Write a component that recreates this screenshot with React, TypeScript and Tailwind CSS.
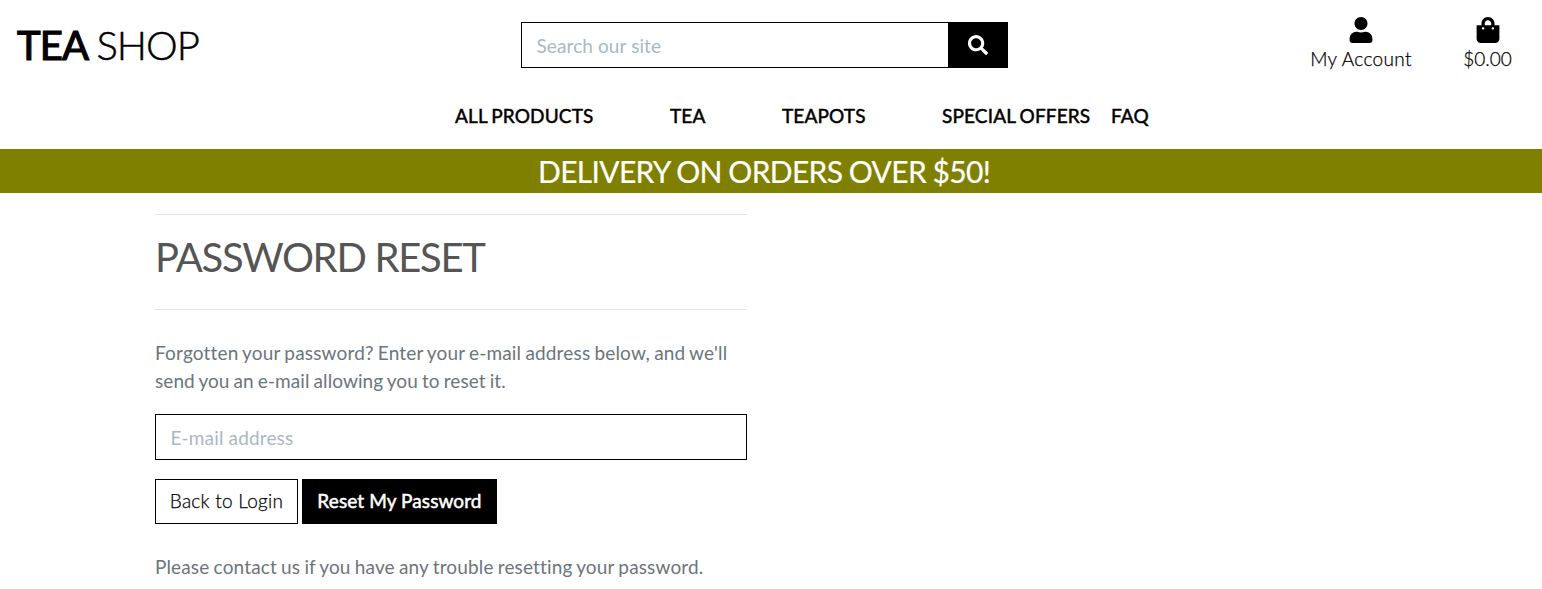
import { FaUser, FaShoppingBag, FaSearch } from "react-icons/fa";

function NavLink({ label, className }: { label: string; className: string }) {
  return (
    <a href="#" className={`block whitespace-nowrap tracking-[0.15px] [-webkit-text-stroke:0.5px] [word-spacing:-1px] ${className}`}>
      {label}
    </a>
  );
}

function Header() {
  return (
    <header className="h-[149px] text-black">
      <div className="flex h-[94px] items-start">
        <a href="#" className="ml-[17px] mt-[16px] w-[504px] text-[40px] leading-[58px]">
          <span className="tracking-[-0.9px] [-webkit-text-stroke:1.2px]">TEA</span>
          <span className="font-light tracking-[-1px] [-webkit-text-stroke:0.5px] [word-spacing:-1.5px]"> SHOP</span>
        </a>
        <form className="mt-[22px] flex h-[46px] w-[487px] border border-black">
          <input className="min-w-0 flex-1 pl-[14.5px] pt-[2px] tracking-[0.1px] outline-none placeholder:text-[#aab7c4]" placeholder="Search our site" />
          <button type="button" className="flex w-[59px] items-center justify-center bg-black text-white">
            <FaSearch size={20} />
          </button>
        </form>
        <a href="#" className="ml-[302px] mt-[17px] flex w-[102px] flex-col items-center whitespace-nowrap font-light tracking-[0.35px]">
          <FaUser size={26} />
          <span className="mt-[1px] leading-[29px] [-webkit-text-stroke:0.25px]">My Account</span>
        </a>
        <a href="#" className="ml-[51px] mt-[17px] flex w-[49px] flex-col items-center whitespace-nowrap font-light">
          <FaShoppingBag size={26} />
          <span className="mt-[1px] leading-[29px] [-webkit-text-stroke:0.25px]">$0.00</span>
        </a>
      </div>
      <nav className="ml-[455px] flex pt-[7px] leading-[29px]">
        <NavLink label="ALL PRODUCTS" className="w-[215px]" />
        <NavLink label="TEA" className="w-[112px]" />
        <NavLink label="TEAPOTS" className="w-[160px]" />
        <NavLink label="SPECIAL OFFERS" className="w-[169px]" />
        <NavLink label="FAQ" className="" />
      </nav>
    </header>
  );
}

export default function App() {
  return (
    <div className="h-[589px] overflow-hidden bg-white font-['Lato',sans-serif] text-[19px] [font-variant-ligatures:none]">
      <Header />
      <div className="h-[44px] bg-[#808000] pl-[538px] text-[30px] leading-[44px] tracking-[-0.67px] text-white [word-spacing:-0.5px] [-webkit-text-stroke:0.2px]">
        DELIVERY ON ORDERS OVER $50!
      </div>
      <main className="ml-[155px] w-[592px] pt-[21px] text-[#6c757d]">
        <h1 className="h-[96px] border-y border-[#e5e5e5] pt-[18px] text-[40px] leading-[48px] tracking-[-1.3px] text-[#555]">
          PASSWORD RESET
        </h1>
        <p className="mt-[29px] leading-[28px] tracking-[0.17px] [word-spacing:-0.9px]">
          Forgotten your password? Enter your e-mail address below, and we'll
          <br />
          <span className="tracking-[0.08px]">send you an e-mail allowing you to reset it.</span>
        </p>
        <input className="mt-[19px] block h-[46px] w-full border border-black px-[14.5px] tracking-[0.15px] outline-none placeholder:text-[#aab7c4]" placeholder="E-mail address" />
        <div className="mt-[19px] flex h-[45px] gap-[4px]">
          <a href="#" className="w-[143px] border border-black text-center font-light leading-[42px] tracking-[0.25px] text-black [-webkit-text-stroke:0.25px]">Back to Login</a>
          <button type="button" className="w-[195px] border border-black bg-black text-center tracking-[0.1px] text-white [-webkit-text-stroke:0.5px]">Reset My Password</button>
        </div>
        <p className="mt-[29px] leading-[28px] tracking-[0.14px] [word-spacing:-0.8px]">Please contact us if you have any trouble resetting your password.</p>
      </main>
    </div>
  );
}
